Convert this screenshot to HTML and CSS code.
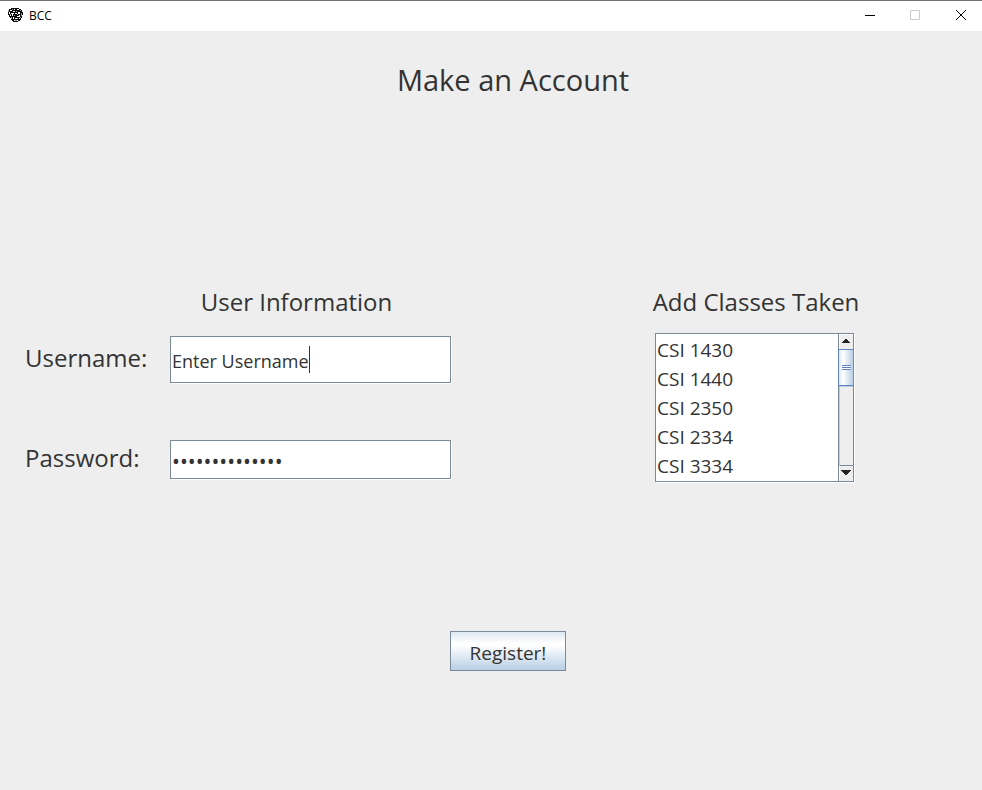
FILE: index.html
```html
<!DOCTYPE html>
<html lang="en">
<head>
<meta charset="utf-8">
<title>BCC</title>
<link rel="stylesheet" href="styles.css">
</head>
<body>
<header class="titlebar">
  <svg class="logo" viewBox="0 0 16 16" aria-hidden="true">
    <path fill="#0a0a0a" d="M1 3h1V2h2V1h8v1h2v1h1v2h1v3h-1v3h-1v2h-1v1h-2v1H6v-1H5v-1H4v-2H3v-1H2V8H1z"/>
    <path fill="#fff" d="M3 3h2v1H3zM7 2h1v1H7zM10 2h2v1h-2zM2 5h1v2H2zM6 4h2v1H6zM4 6h3v1H4zM5 7h1v2H5zM8 6h2v1H8zM11 5h2v2h-2zM10 9h2v1h-2zM3 8h1v1H3zM6 10h1v2H6zM12 8h1v2h-1zM8 11h2v1H8zM12 11h1v1h-1zM7 13h1v1H7zM10 13h1v1h-1z"/>
    <path fill="#999" d="M1 3h1v2H1zM5 2h1v1H5zM13 3h1v1h-1zM9 4h1v1H9zM14 6h1v3h-1zM3 7h1v1H3zM7 8h1v1H7zM10 7h1v1h-1zM4 10h1v2H4zM10 11h1v1h-1zM13 10h1v1h-1zM8 13h2v1H8z"/>
  </svg>
  <span class="app-name">BCC</span>
  <div class="window-controls">
    <button type="button" aria-label="Minimize"><svg viewBox="0 0 10 10"><path d="M0 5.500h10" stroke="#000"/></svg></button>
    <button type="button" aria-label="Maximize" disabled><svg viewBox="0 0 10 10"><path d="M.5 .5h9v9h-9z" fill="none" stroke="#ccc"/></svg></button>
    <button type="button" aria-label="Close"><svg viewBox="0 0 10 10"><path d="M1 0l10 10M11 0L1 10" stroke="#000"/></svg></button>
  </div>
</header>
<main>
  <h1>Make an Account</h1>
  <form>
    <div class="columns">
      <section class="user">
        <h2>User Information</h2>
        <div class="row">
          <label for="username">Username:</label>
          <div class="field">
            <input id="username" type="text" value="Enter Username">
            <span class="caret"></span>
          </div>
        </div>
        <div class="row row-password">
          <label for="password">Password:</label>
          <div class="field">
            <input id="password" type="password" value="Enter Password">
          </div>
        </div>
      </section>
      <section class="classes">
        <h2><label for="classes">Add Classes Taken</label></h2>
        <div class="listbox">
          <select id="classes" size="5" multiple>
            <option>CSI 1430</option>
            <option>CSI 1440</option>
            <option>CSI 2350</option>
            <option>CSI 2334</option>
            <option>CSI 3334</option>
          </select>
          <div class="scrollbar" aria-hidden="true">
            <span class="arrow"><svg viewBox="0 0 8 4"><path d="M0 4h8v-1H7V2H6V1H5V0H3v1H2v1H1v1H0z" fill="#222"/></svg></span>
            <span class="thumb"></span>
            <span class="track"></span>
            <span class="arrow arrow-down"><svg viewBox="0 0 10 5"><path d="M0 0h10v1H9v1H8v1H7v1H6v1H4V4H3V3H2V2H1V1H0z" fill="#222"/></svg></span>
          </div>
        </div>
      </section>
    </div>
    <div class="actions"><button class="register" type="button">Register!</button></div>
  </form>
</main>
</body>
</html>
```
FILE: styles.css
```css
* {
  box-sizing: border-box;
}

body {
  margin: 0;
  min-height: 100vh;
  background: #eee;
  color: #333;
  font-family: "Open Sans", "Noto Sans", sans-serif;
}

.titlebar {
  display: flex;
  align-items: center;
  height: 31px;
  padding: 0 0 2px 7px;
  background: #fff;
  border-top: 1px solid #6e6e6e;
}

.logo {
  width: 16px;
  height: 16px;
  shape-rendering: crispEdges;
}

.app-name {
  margin-left: 6px;
  color: #000;
  font-size: 12px;
}

.window-controls {
  display: flex;
  margin-left: auto;
}

.window-controls button {
  display: grid;
  place-items: center;
  width: 45px;
  height: 28px;
  padding: 0;
  border: 0;
  background: none;
}

.window-controls svg {
  width: 10px;
  height: 10px;
  overflow: visible;
}

h1,
h2 {
  margin: 0;
  font-weight: 400;
  text-align: center;
}

h1 {
  padding: 29px 0 0 44px;
  font-size: 29px;
  line-height: 40px;
}

h2 {
  font-size: 24px;
  line-height: 36px;
  white-space: nowrap;
}

.columns {
  display: flex;
  justify-content: space-between;
  padding: 184px 120px 0 25px;
}

.user h2 {
  padding-left: 117px;
}

.row {
  display: grid;
  grid-template-columns: 145px 281px;
  grid-template-rows: 100%;
  align-items: center;
  height: 47px;
  margin-top: 16px;
}

.row-password {
  height: 39px;
  margin-top: 57px;
}

.row label {
  padding-bottom: 4px;
  font-size: 24px;
  line-height: 32px;
}

.field {
  position: relative;
  height: 100%;
}

.field input {
  display: block;
  width: 100%;
  height: 100%;
  padding: 2px 1px 0;
  border: 1px solid #7a8a99;
  border-radius: 0;
  outline: 0;
  background: #fff;
  color: #333;
  font-family: inherit;
  font-size: 18px;
  box-shadow: 1px 1px #fff;
}

.field #password {
  font-size: 21px;
}

.caret {
  position: absolute;
  top: 10px;
  left: 139px;
  width: 1px;
  height: 27px;
  background: #333;
}

.classes {
  width: 212px;
}

.listbox {
  display: flex;
  width: 199px;
  height: 149px;
  margin: 13px 0 0 5px;
  border: 1px solid #7a8a99;
  background: #fff;
  box-shadow: 1px 1px #fff;
}

.listbox select {
  flex: 1;
  height: 147px;
  padding: 3px 0 0;
  overflow: hidden;
  border: 0;
  outline: 0;
  background: #fff;
  color: #333;
  font-family: inherit;
  font-size: 19px;
}

.listbox option {
  min-height: 29px;
  padding: 0 1px;
  line-height: 29px;
}

.scrollbar {
  display: flex;
  flex-direction: column;
  width: 15px;
  border-left: 1px solid #7a8a99;
  background: #eee;
}

.arrow {
  display: grid;
  place-items: center;
  height: 15px;
  padding: 0 2px 2px 0;
  border-top: 1px solid #fff;
  border-left: 1px solid #fff;
}

.arrow svg {
  width: 8px;
  height: 4px;
}

.arrow-down {
  height: 16px;
  border-top-color: #7a8a99;
}

.arrow-down svg {
  width: 10px;
  height: 5px;
}

.thumb {
  display: grid;
  place-items: center;
  height: 37px;
  margin-left: -1px;
  border: 1px solid #6382bf;
  border-right: 0;
  background: linear-gradient(90deg, #dde8f3, #fff 30%, #b8cfe5);
}

.thumb::before {
  content: "";
  width: 9px;
  height: 5px;
  background: repeating-linear-gradient(#6382bf 0 1px, #fff 1px 2px);
}

.track {
  flex: 1;
  border-left: 1px solid #b8cfe5;
  border-top: 1px solid #b8cfe5;
}

.actions {
  display: flex;
  justify-content: center;
  padding: 149px 0 40px 34px;
}

.register {
  width: 116px;
  height: 40px;
  padding: 3px 0 0;
  border: 1px solid #7a8a99;
  background: linear-gradient(#dde8f3, #fff 30%, #fff 35%, #b8cfe5);
  color: #333;
  font-family: inherit;
  font-size: 19px;
}
```
